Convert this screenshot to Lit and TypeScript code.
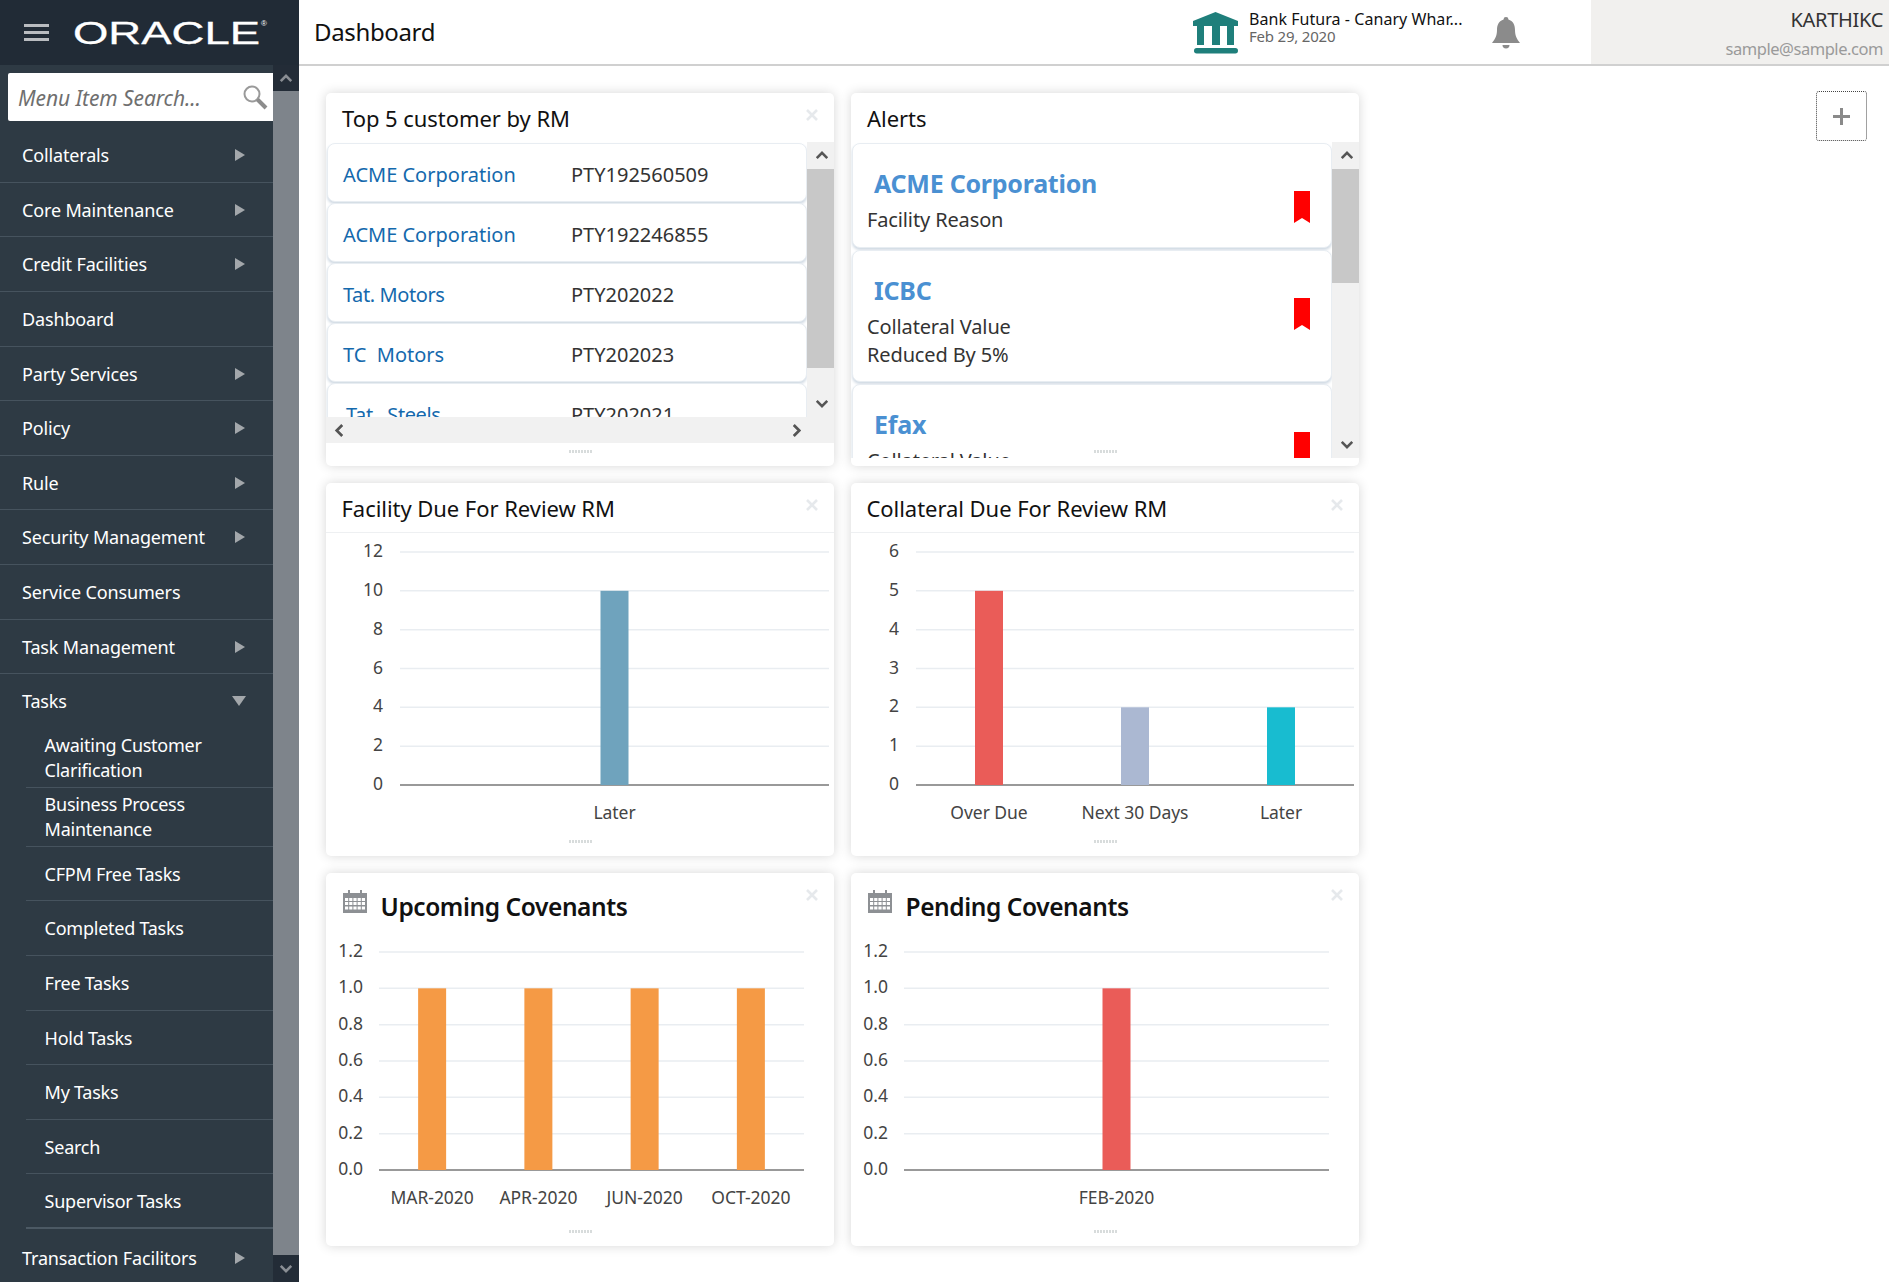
import { LitElement, html, css, svg } from "lit";
import { customElement, property } from "lit/decorators.js";

const FONT = `"Noto Sans", "Open Sans", "Liberation Sans", sans-serif`;

const chevron = (dir: "up" | "down" | "left" | "right", color = "#555") => {
  const d = {
    up: "M2 9 L8 3 L14 9",
    down: "M2 3 L8 9 L14 3",
    left: "M9 1 L3 7 L9 13",
    right: "M3 1 L9 7 L3 13",
  }[dir];
  const box = dir === "up" || dir === "down" ? "0 0 16 12" : "0 0 12 14";
  const w = dir === "up" || dir === "down" ? 14 : 11;
  const h = dir === "up" || dir === "down" ? 11 : 13;
  return html`<svg width=${w} height=${h} viewBox=${box}><path d=${d} fill="none" stroke=${color} stroke-width="3"/></svg>`;
};

interface Bar { label: string; value: number; color: string }

@customElement("bar-chart")
class BarChart extends LitElement {
  static styles = css`
    :host { display: block; }
    svg { display: block; }
    text { font-family: ${css([FONT] as any)}; }
    .tick { font-size: 17.5px; fill: #444; }
    .cat { font-size: 17.5px; fill: #444; letter-spacing: -0.05px; }
  `;
  @property({ type: Array }) ticks: string[] = [];
  @property({ type: Array }) bars: Bar[] = [];
  @property({ type: Number }) max = 1;
  @property({ type: Number }) left = 0;
  @property({ type: Number }) right = 0;
  @property({ type: Number }) top = 0;
  @property({ type: Number }) bottom = 0;
  @property({ type: Number }) h = 300;
  @property({ type: Number }) tickGap = 17;

  render() {
    const { left, right, top, bottom, ticks, bars, max, tickGap } = this;
    const n = ticks.length - 1;
    const step = (bottom - top) / n;
    const cw = (right - left) / bars.length;
    return html`<svg width="508" height=${this.h}>
      ${ticks.map((t, i) => {
        const y = top + i * step;
        const last = i === n;
        return svg`<line x1=${left} x2=${right} y1=${y} y2=${y} stroke=${last ? "#999" : "#e9edf1"} stroke-width=${last ? 2 : 1.5}></line>
          <text class="tick" x=${left - tickGap} y=${y + 5} text-anchor="end">${t}</text>`;
      })}
      ${bars.map((b, i) => {
        const cx = left + cw * (i + 0.5);
        const bh = (b.value / max) * (bottom - top);
        return svg`<rect x=${cx - 14} y=${bottom - bh} width="28" height=${bh} fill=${b.color}></rect>
          <text class="cat" x=${cx} y=${bottom + 34} text-anchor="middle">${b.label}</text>`;
      })}
    </svg>`;
  }
}

const calendar = html`<svg width="24" height="23" viewBox="0 0 24 23">
  <path fill="#8d9094" d="M0 3h5V0h2v3h10V0h2v3h5v20H0z"/>
  <g fill="#fff">
    ${[8, 12, 16.5].map((y) => [2, 6.2, 10.4, 14.6, 18.8].map((x) => svg`<rect x=${x} y=${y} width="3.2" height="3"></rect>`))}
  </g>
</svg>`;

const closeX = html`<svg class="close" width="12" height="12" viewBox="0 0 12 12"><path d="M1 1 L11 11 M11 1 L1 11" stroke="#e6e9ec" stroke-width="2.6"/></svg>`;
const bookmark = html`<svg class="bm" width="16" height="32" viewBox="0 0 16 32"><polygon points="0,0 16,0 16,32 8,27 0,32" fill="#ff0000"/></svg>`;

@customElement("app-root")
class AppRoot extends LitElement {
  static styles = css`
    :host { display: block; width: 1889px; height: 1282px; overflow: hidden; background: #fff; font-family: ${css([FONT] as any)}; color: #333; }
    .shell { display: grid; grid-template-columns: 299px 1fr; height: 1282px; }
    .side { display: flex; flex-direction: column; height: 1282px; }
    .brand { height: 65px; background: #212b36; display: flex; align-items: center; padding-left: 24px; box-sizing: border-box; flex: none; }
    .burger { width: 25px; display: flex; flex-direction: column; gap: 4.5px; margin-right: 23.5px; }
    .burger i { display: block; height: 2.5px; background: #b9bcc0; }
    .logo { display: block; }
    .logo text { font-family: "Liberation Sans", sans-serif; fill: #fff; }
    .sbody { flex: 1; display: flex; min-height: 0; }
    .nav { width: 273px; background: #2e3a44; display: flex; flex-direction: column; color: #fff; }
    .searchwrap { height: 63.3px; padding: 8px 0 0 8px; box-sizing: border-box; flex: none; }
    .search { height: 48px; background: #fff; border-radius: 2px 0 0 2px; display: flex; align-items: center; justify-content: space-between; padding: 0 5px 0 10px; }
    .search span { font-style: italic; font-size: 21px; color: #6f6f6f; letter-spacing: -0.1px; padding-top: 2px; }
    .item { height: 54.6px; box-sizing: border-box; flex: none; display: flex; align-items: center; justify-content: space-between; padding: 0.2px 28px 0 22px; border-bottom: 1px solid #46535e; font-size: 18px; letter-spacing: -0.15px; }
    .tri { width: 0; height: 0; border-left: 10px solid #a3a7ab; border-top: 6.5px solid transparent; border-bottom: 6.5px solid transparent; }
    .tridown { width: 0; height: 0; border-top: 10px solid #a3a7ab; border-left: 7px solid transparent; border-right: 7px solid transparent; margin-right: -0.5px; }
    .tasks { height: 54px; border-bottom: none; }
    .item.tail { border-bottom: none; padding-top: 2px; }
    .sub { margin-left: 26px; padding: 1.5px 10px 0 18.6px; height: 54.6px; box-sizing: border-box; flex: none; display: flex; align-items: center; border-bottom: 1px solid #46535e; font-size: 18px; letter-spacing: -0.25px; line-height: 25px; }
    .sub.two { height: 59.3px; }
    .sub.last { border-bottom-width: 2px; border-bottom-color: #4c5964; height: 55px; }
    .sbar { width: 26px; background: #7e848b; display: flex; flex-direction: column; justify-content: space-between; }
    .sbtn { height: 26px; background: #232c37; display: flex; align-items: center; justify-content: center; }
    .sbtn.b { height: 27px; }
    .main { display: flex; flex-direction: column; min-width: 0; }
    .top { height: 66px; flex: none; display: flex; align-items: stretch; border-bottom: 2px solid #d0d0d0; box-sizing: border-box; }
    .page { font-size: 24px; color: #111; padding-left: 15px; width: 894px; box-sizing: border-box; line-height: 64px; letter-spacing: -0.35px; flex: none; }
    .bank { display: block; margin-top: 11px; }
    .tinfo { margin-left: 11px; width: 243px; padding-top: 10px; flex: none; }
    .tinfo b { display: block; font-weight: 400; font-size: 16px; line-height: 19px; color: #111; white-space: nowrap; letter-spacing: 0.05px; }
    .tinfo span { display: block; font-size: 15px; line-height: 16px; color: #666; letter-spacing: -0.2px; margin-top: -1px; }
    .bell { display: block; margin-top: 17px; }
    .user { margin-left: 71px; flex: 1; background: #f1f0ee; text-align: right; padding: 6px 6px 0 0; }
    .user b { display: block; font-weight: 400; font-size: 20px; line-height: 28px; color: #333; letter-spacing: -0.3px; }
    .user span { display: block; font-size: 16.5px; line-height: 24px; margin-top: 3px; color: #9a9a9a; letter-spacing: -0.45px; }
    .content { flex: 1; display: flex; justify-content: space-between; padding: 25px 22px 0 27px; }
    .grid { display: grid; grid-template-columns: 508px 508px; grid-auto-rows: 373px; gap: 17px; margin-top: 2px; }
    .plus { width: 51px; height: 50px; box-sizing: border-box; border: 1px dotted #444; border-radius: 3px; display: flex; align-items: center; justify-content: center; }
    .card { background: #fff; border-radius: 5px; box-shadow: 0 0 12px rgba(0, 0, 0, 0.16); position: relative; overflow: hidden; display: flex; flex-direction: column; }
    .close { position: absolute; right: 16px; top: 16px; }
    .grip { position: absolute; left: 243px; bottom: 13px; width: 24px; height: 3px; background: repeating-linear-gradient(90deg, #d8dcdc 0 2px, transparent 2px 3px); }
    .hd { height: 49px; flex: none; font-size: 22px; line-height: 51px; padding-left: 16px; color: #111; letter-spacing: -0.05px; box-sizing: border-box; }
    .hd.line { height: 50px; border-bottom: 1px solid #eef0f2; padding-left: 15.5px; }
    .hd2 { height: 60px; flex: none; display: flex; padding: 17px 0 0 16.5px; box-sizing: border-box; }
    .hd2 b { font-weight: 600; font-size: 24.5px; line-height: 32px; color: #111; margin-left: 14px; letter-spacing: -0.42px; margin-top: 0.5px; white-space: nowrap; }
    .body { display: grid; grid-template-columns: 1fr 27px; }
    .view { overflow: hidden; height: 275px; padding: 1px 0 0 1px; box-sizing: border-box; }
    .view.tall { height: 316px; }
    .vbar { background: #f1f1f1; display: flex; flex-direction: column; align-items: stretch; }
    .vbtn { height: 27px; flex: none; display: flex; align-items: center; justify-content: center; padding-left: 2px; }
    .vthumb { background: #c8c8c8; flex: none; }
    .vfill { flex: 1; }
    .hbar { grid-column: 1 / 3; height: 26px; background: #f1f1f1; display: flex; align-items: center; justify-content: space-between; padding: 0 32px 0 8px; }
    .row { height: 59px; margin-bottom: 1px; background: #fff; border: 1px solid #e8edf2; border-radius: 8px; box-shadow: 0 2px 3px #cfd9e3; box-sizing: border-box; display: flex; align-items: center; padding: 4px 0 0 15px; font-size: 20px; white-space: pre; }
    .row a { color: #1469ad; width: 228px; flex: none; }
    .row a.tight { letter-spacing: -0.4px; }
    .row.ind a { padding-left: 3px; width: 225px; }
    .alert { background: #fff; border: 1px solid #e8edf2; border-radius: 8px; box-shadow: 0 2px 3px #cfd9e3; box-sizing: border-box; display: flex; padding: 22px 21px 0 14px; margin-bottom: 2px; }
    .alert .tx { flex: 1; }
    .alert h4 { margin: 0 0 0 7px; font-size: 25px; line-height: 34px; font-weight: 700; color: #4a90d2; letter-spacing: -0.25px; }
    .alert p { margin: 6px 0 0; font-size: 20px; line-height: 28px; color: #333; letter-spacing: -0.13px; }
    .bm { flex: none; margin-top: 25px; }
  `;

  render() {
    const menu1 = ["Collaterals", "Core Maintenance", "Credit Facilities", "Dashboard", "Party Services", "Policy", "Rule", "Security Management", "Service Consumers", "Task Management"];
    const noArrow = new Set(["Dashboard", "Service Consumers"]);
    const subs1 = ["CFPM Free Tasks", "Completed Tasks", "Free Tasks", "Hold Tasks", "My Tasks", "Search"];
    const cov = ["1.2", "1.0", "0.8", "0.6", "0.4", "0.2", "0.0"];
    const orange = "#f59a45";
    const red = "#ea5c58";
    return html`<div class="shell">
      <aside class="side">
        <div class="brand">
          <div class="burger"><i></i><i></i><i></i></div>
          <svg class="logo" width="200" height="34" viewBox="0 0 200 34">
            <text x="0" y="27.5" font-size="32" textLength="187" lengthAdjust="spacingAndGlyphs" stroke="#fff" stroke-width="0.3">ORACLE</text>
            <text x="188" y="10" font-size="8" fill="#ccc">®</text>
          </svg>
        </div>
        <div class="sbody">
          <nav class="nav">
            <div class="searchwrap">
              <div class="search"><span>Menu Item Search...</span>
                <svg width="26" height="26" viewBox="0 0 26 26"><circle cx="10" cy="10" r="7.5" fill="none" stroke="#9a9a9a" stroke-width="2"/><path d="M15.5 15.5 L24 24" stroke="#8c8c8c" stroke-width="4"/></svg>
              </div>
            </div>
            ${menu1.map((m) => html`<div class="item"><span>${m}</span>${noArrow.has(m) ? "" : html`<i class="tri"></i>`}</div>`)}
            <div class="item tasks"><span>Tasks</span><i class="tridown"></i></div>
            <div class="sub two">Awaiting Customer<br />Clarification</div>
            <div class="sub two">Business Process<br />Maintenance</div>
            ${subs1.map((s) => html`<div class="sub">${s}</div>`)}
            <div class="sub last">Supervisor Tasks</div>
            <div class="item tail"><span>Transaction Facilitors</span><i class="tri"></i></div>
          </nav>
          <div class="sbar">
            <div class="sbtn">${chevron("up", "#8a8e94")}</div>
            <div class="sbtn b">${chevron("down", "#8a8e94")}</div>
          </div>
        </div>
      </aside>
      <div class="main">
        <header class="top">
          <div class="page">Dashboard</div>
          <svg class="bank" width="45" height="43" viewBox="0 0 45 43" fill="#1f7f7b">
            <polygon points="22.5,1 45,10 45,15 0,15 0,10"/>
            <rect x="4" y="14" width="7" height="20"/><rect x="19" y="14" width="8" height="20"/><rect x="34" y="14" width="7" height="20"/>
            <rect x="1" y="37" width="44" height="5.5" rx="2.7"/>
          </svg>
          <div class="tinfo"><b>Bank Futura - Canary Whar...</b><span>Feb 29, 2020</span></div>
          <svg class="bell" width="28" height="32" viewBox="0 0 28 32" fill="#8b8b8b">
            <path d="M14 0a2.4 2.4 0 0 1 2.4 2.6C21 4 23 8 23 13c0 6 2 9 5 13H0c3-4 5-7 5-13 0-5 2-9 6.6-10.4A2.4 2.4 0 0 1 14 0z"/>
            <path d="M10.5 28h7a3.5 3.5 0 0 1-7 0z"/>
          </svg>
          <div class="user"><b>KARTHIKC</b><span>sample@sample.com</span></div>
        </header>
        <div class="content">
          <div class="grid">
            <section class="card">
              <div class="hd">Top 5 customer by RM</div>${closeX}
              <div class="body">
                <div class="view">
                  <div class="row"><a>ACME Corporation</a><span>PTY192560509</span></div>
                  <div class="row"><a>ACME Corporation</a><span>PTY192246855</span></div>
                  <div class="row"><a class="tight">Tat. Motors</a><span>PTY202022</span></div>
                  <div class="row"><a>TC  Motors</a><span>PTY202023</span></div>
                  <div class="row ind"><a class="tight">Tat . Steels</a><span>PTY202021</span></div>
                </div>
                <div class="vbar">
                  <div class="vbtn">${chevron("up")}</div>
                  <div class="vthumb" style="height:199px"></div>
                  <div class="vfill"></div>
                  <div class="vbtn">${chevron("down")}</div>
                </div>
                <div class="hbar">${chevron("left")}${chevron("right")}</div>
              </div>
              <i class="grip"></i>
            </section>
            <section class="card">
              <div class="hd">Alerts</div>
              <div class="body">
                <div class="view tall">
                  <div class="alert" style="height:105px"><div class="tx"><h4>ACME Corporation</h4><p>Facility Reason</p></div>${bookmark}</div>
                  <div class="alert" style="height:132px"><div class="tx"><h4>ICBC</h4><p>Collateral Value<br />Reduced By 5%</p></div>${bookmark}</div>
                  <div class="alert" style="height:132px"><div class="tx"><h4>Efax</h4><p>Collateral Value<br />Reduced By 5%</p></div>${bookmark}</div>
                </div>
                <div class="vbar">
                  <div class="vbtn">${chevron("up")}</div>
                  <div class="vthumb" style="height:114px"></div>
                  <div class="vfill"></div>
                  <div class="vbtn">${chevron("down")}</div>
                </div>
              </div>
              <i class="grip"></i>
            </section>
            <section class="card">
              <div class="hd line">Facility Due For Review RM</div>${closeX}
              <bar-chart .ticks=${["12", "10", "8", "6", "4", "2", "0"]} .max=${12} .left=${74} .right=${503} .top=${19} .bottom=${252} .h=${320}
                .bars=${[{ label: "Later", value: 10, color: "#6fa3bd" }]}></bar-chart>
              <i class="grip"></i>
            </section>
            <section class="card">
              <div class="hd line">Collateral Due For Review RM</div>${closeX}
              <bar-chart .ticks=${["6", "5", "4", "3", "2", "1", "0"]} .max=${6} .left=${65} .right=${503} .top=${19} .bottom=${252} .h=${320}
                .bars=${[{ label: "Over Due", value: 5, color: red }, { label: "Next 30 Days", value: 2, color: "#abb8d2" }, { label: "Later", value: 2, color: "#18bcd0" }]}></bar-chart>
              <i class="grip"></i>
            </section>
            <section class="card">
              <div class="hd2">${calendar}<b>Upcoming Covenants</b></div>${closeX}
              <bar-chart .ticks=${cov} .max=${1.2} .left=${53} .right=${478} .top=${19} .bottom=${237} .h=${310} .tickGap=${16}
                .bars=${["MAR-2020", "APR-2020", "JUN-2020", "OCT-2020"].map((label) => ({ label, value: 1, color: orange }))}></bar-chart>
              <i class="grip"></i>
            </section>
            <section class="card">
              <div class="hd2">${calendar}<b>Pending Covenants</b></div>${closeX}
              <bar-chart .ticks=${cov} .max=${1.2} .left=${53} .right=${478} .top=${19} .bottom=${237} .h=${310} .tickGap=${16}
                .bars=${[{ label: "FEB-2020", value: 1, color: red }]}></bar-chart>
              <i class="grip"></i>
            </section>
          </div>
          <div class="plus"><svg width="19" height="19" viewBox="0 0 19 19"><path d="M9.5 1v17M1 9.5h17" stroke="#8a8a8a" stroke-width="3"/></svg></div>
        </div>
      </div>
    </div>`;
  }
}
